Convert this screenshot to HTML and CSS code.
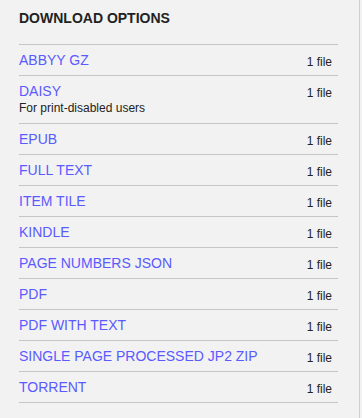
FILE: index.html
```html
<!DOCTYPE html>
<html lang="en">
<head>
  <meta charset="UTF-8" />
  <meta name="viewport" content="width=device-width, initial-scale=1.0" />
  <title>Download Options</title>
  <link rel="stylesheet" href="styles.css">
</head>
<body>

  <div class="panel">
    <h5 class="panel-title">DOWNLOAD OPTIONS</h5>

    <div class="format-list">
      <div class="format-row">
        <div class="format-name"><a href="#">ABBYY GZ</a></div>
        <span class="format-count">1 file</span>
      </div>
      <div class="format-row">
        <div class="format-name">
          <a href="#">DAISY</a>
          <div class="format-note">For print-disabled users</div>
        </div>
        <span class="format-count">1 file</span>
      </div>
      <div class="format-row">
        <div class="format-name"><a href="#">EPUB</a></div>
        <span class="format-count">1 file</span>
      </div>
      <div class="format-row">
        <div class="format-name"><a href="#">FULL TEXT</a></div>
        <span class="format-count">1 file</span>
      </div>
      <div class="format-row">
        <div class="format-name"><a href="#">ITEM TILE</a></div>
        <span class="format-count">1 file</span>
      </div>
      <div class="format-row">
        <div class="format-name"><a href="#">KINDLE</a></div>
        <span class="format-count">1 file</span>
      </div>
      <div class="format-row">
        <div class="format-name"><a href="#">PAGE NUMBERS JSON</a></div>
        <span class="format-count">1 file</span>
      </div>
      <div class="format-row">
        <div class="format-name"><a href="#">PDF</a></div>
        <span class="format-count">1 file</span>
      </div>
      <div class="format-row">
        <div class="format-name"><a href="#">PDF WITH TEXT</a></div>
        <span class="format-count">1 file</span>
      </div>
      <div class="format-row">
        <div class="format-name"><a href="#">SINGLE PAGE PROCESSED JP2 ZIP</a></div>
        <span class="format-count">1 file</span>
      </div>
      <div class="format-row">
        <div class="format-name"><a href="#">TORRENT</a></div>
        <span class="format-count">1 file</span>
      </div>
    </div>
  </div>

</body>
</html>
```

FILE: styles.css
```css
body {
  margin: 0;
  padding: 0;
  background-color: #f2f2f2;
  font-family: "Liberation Sans", Arial, sans-serif;
  color: #222;
}

.panel {
  box-sizing: border-box;
  width: 360px;
  min-height: 418px;
  padding: 9px 21px 0 19px;
  border-right: 1px solid #cfcfcf;
}

.panel-title {
  margin: 0 0 17px;
  font-size: 14px;
  line-height: 18px;
  font-weight: bold;
  color: #222;
}

.format-list {
  border-bottom: 1px solid #c6c6c6;
}

.format-row {
  display: flex;
  justify-content: space-between;
  align-items: flex-start;
  padding: 6px 6px 6px 0;
  border-top: 1px solid #c6c6c6;
}

.format-name a {
  display: block;
  font-size: 14px;
  line-height: 18px;
  color: #5a5aff;
  text-decoration: none;
}

.format-note {
  font-size: 12px;
  line-height: 17px;
  color: #222;
}

.format-count {
  padding-top: 4px;
  font-size: 12px;
  line-height: 14px;
  color: #222;
}
```
